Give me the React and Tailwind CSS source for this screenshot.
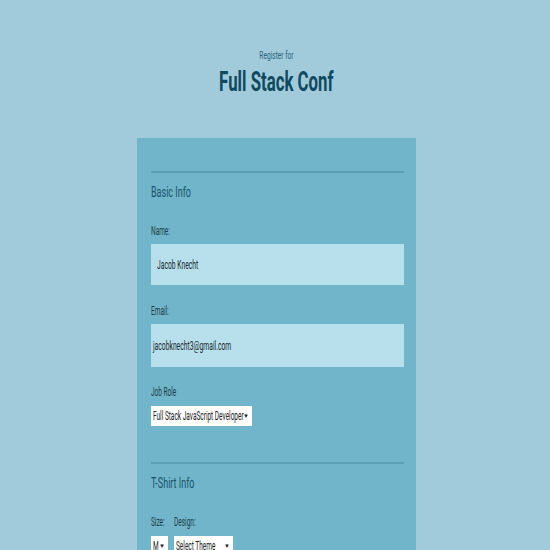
import React from 'react';

const font = { fontFamily: 'Roboto, "Liberation Sans", sans-serif' };

// narrow text to match the condensed look of the reference
const Sq = ({ children, className = 'scale-x-[0.5]' }) => (
  <span className={`inline-block origin-left whitespace-nowrap ${className}`}>{children}</span>
);

const Select = ({ label, width }) => (
  <div className={`flex h-[20px] items-center bg-white pl-[2px] pr-[3px] text-[13px] text-[#222] ${width}`}>
    <div className="min-w-0 flex-1">
      <Sq>{label}</Sq>
    </div>
    <span className="text-[6px] leading-none">▼</span>
  </div>
);

const App = () => {
  return (
    <div className="h-[550px] overflow-hidden bg-[#a1cbdb] pl-[3px] text-[#184f63]" style={font}>
      {/* Header */}
      <div className="pt-[49px] text-center">
        <p className="text-[11px] leading-[14px] text-[#2c6478]">
          <span className="inline-block scale-x-[0.6] whitespace-nowrap">Register for</span>
        </p>
        <h1 className="mt-[2px] text-[28px] leading-[34px] font-bold text-[#0f4a60]">
          <span className="inline-block scale-x-[0.6] whitespace-nowrap">Full Stack Conf</span>
        </h1>
      </div>

      {/* Form card */}
      <div className="mx-auto mt-[39px] w-[279px] bg-[#70b5c9] pl-[14px] pr-[12px] pt-[33px] pb-10">
        <div className="border-t-2 border-[#5b9fb3]" />
        <h2 className="mt-[10px] text-[15px] leading-[18px] text-[#18536a]">
          <Sq className="scale-x-[0.6]">Basic Info</Sq>
        </h2>

        <label className="mt-[23px] block text-[13px] leading-[14px] text-[#1e3d48]">
          <Sq>Name:</Sq>
        </label>
        <div className="mt-[6px] flex h-[41px] w-full items-center bg-[#b7e0ec] px-[6px] text-[13.5px] text-[#1c2a30]">
          <Sq>Jacob Knecht</Sq>
        </div>

        <label className="mt-[19px] block text-[13px] leading-[14px] text-[#1e3d48]">
          <Sq>Email:</Sq>
        </label>
        <div className="mt-[6px] flex h-[43px] w-full items-center bg-[#b7e0ec] px-[2px] text-[13.5px] text-[#1c2a30]">
          <Sq>jacobknecht3@gmail.com</Sq>
        </div>

        <label className="mt-[18px] block text-[13px] leading-[14px] text-[#1e3d48]">
          <Sq>Job Role</Sq>
        </label>
        <div className="mt-[7px]">
          <Select label="Full Stack JavaScript Developer" width="w-[101px]" />
        </div>

        <div className="mt-[36px] border-t-2 border-[#5b9fb3]" />
        <h2 className="mt-[10px] text-[15px] leading-[18px] text-[#18536a]">
          <Sq className="scale-x-[0.6]">T-Shirt Info</Sq>
        </h2>

        <div className="mt-[23px] flex text-[13px] leading-[14px] text-[#1e3d48]">
          <span className="w-[23px]"><Sq>Size:</Sq></span>
          <Sq>Design:</Sq>
        </div>
        <div className="mt-[7px] flex gap-[6px]">
          <Select label="M" width="w-[17px]" />
          <Select label="Select Theme" width="w-[59px]" />
        </div>
      </div>
    </div>
  );
};

export default App;
